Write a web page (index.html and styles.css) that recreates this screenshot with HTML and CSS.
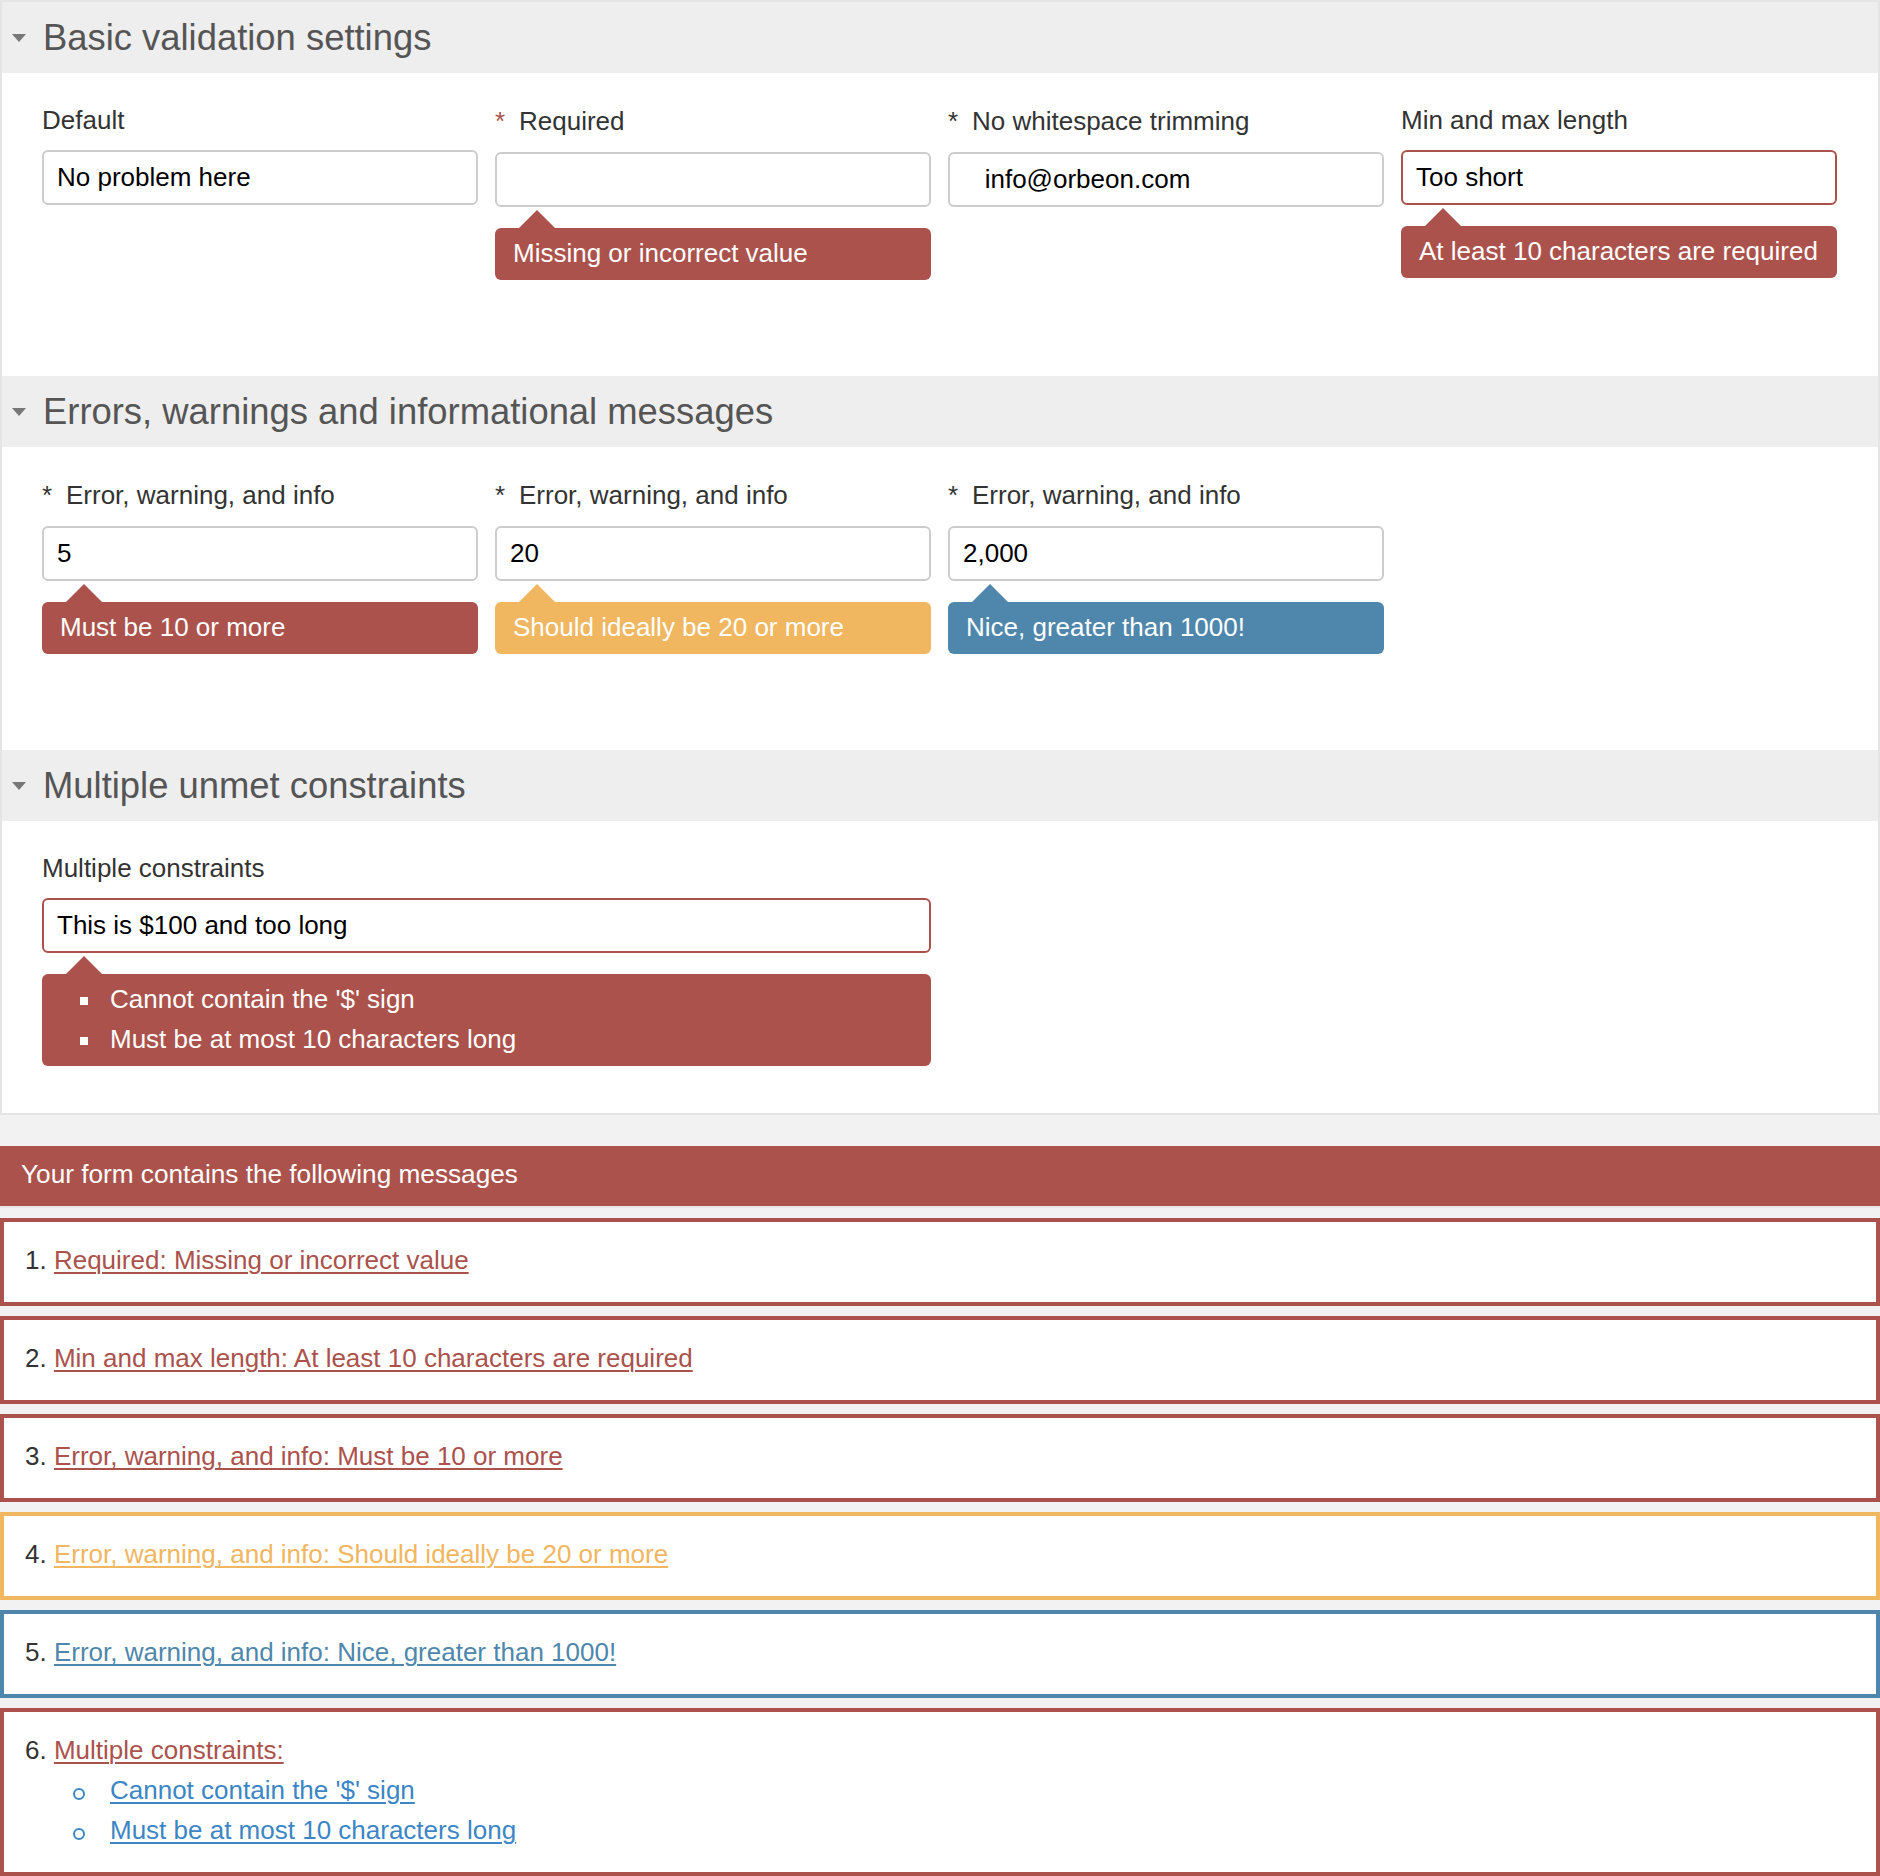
FILE: index.html
```html
<!DOCTYPE html>
<html lang="en">
<head>
<meta charset="utf-8">
<title>Validation</title>
<link rel="stylesheet" href="styles.css">
</head>
<body>
<div class="form">
  <section class="section">
    <div class="section-head"><span class="caret"></span><h2 class="section-title">Basic validation settings</h2></div>
    <div class="section-body">
      <div class="fields fields-tall">
        <div class="field">
          <div class="label">Default</div>
          <input class="input" type="text" value="No problem here">
        </div>
        <div class="field">
          <div class="label req"><span class="star star-red">*</span>Required</div>
          <input class="input" type="text" value="">
          <div class="tip tip-error">Missing or incorrect value</div>
        </div>
        <div class="field">
          <div class="label req"><span class="star">*</span>No whitespace trimming</div>
          <input class="input" type="text" value="   info@orbeon.com">
        </div>
        <div class="field">
          <div class="label">Min and max length</div>
          <input class="input input-error" type="text" value="Too short">
          <div class="tip tip-error">At least 10 characters are required</div>
        </div>
      </div>
    </div>
  </section>

  <section class="section">
    <div class="section-head"><span class="caret"></span><h2 class="section-title">Errors, warnings and informational messages</h2></div>
    <div class="section-body">
      <div class="fields fields-tall">
        <div class="field">
          <div class="label req"><span class="star">*</span>Error, warning, and info</div>
          <input class="input" type="text" value="5">
          <div class="tip tip-error">Must be 10 or more</div>
        </div>
        <div class="field">
          <div class="label req"><span class="star">*</span>Error, warning, and info</div>
          <input class="input" type="text" value="20">
          <div class="tip tip-warning">Should ideally be 20 or more</div>
        </div>
        <div class="field">
          <div class="label req"><span class="star">*</span>Error, warning, and info</div>
          <input class="input" type="text" value="2,000">
          <div class="tip tip-info">Nice, greater than 1000!</div>
        </div>
      </div>
    </div>
  </section>

  <section class="section">
    <div class="section-head"><span class="caret"></span><h2 class="section-title">Multiple unmet constraints</h2></div>
    <div class="section-body">
      <div class="fields">
        <div class="field field-wide">
          <div class="label">Multiple constraints</div>
          <input class="input input-error" type="text" value="This is $100 and too long">
          <div class="tip tip-error">
            <ul class="tip-list">
              <li>Cannot contain the '$' sign</li>
              <li>Must be at most 10 characters long</li>
            </ul>
          </div>
        </div>
      </div>
    </div>
  </section>
</div>

<div class="summary">
  <div class="summary-head">Your form contains the following messages</div>
  <ol class="summary-list">
    <li class="msg msg-error"><span class="num">1.</span> <a href="#" class="msg-link">Required: Missing or incorrect value</a></li>
    <li class="msg msg-error"><span class="num">2.</span> <a href="#" class="msg-link">Min and max length: At least 10 characters are required</a></li>
    <li class="msg msg-error"><span class="num">3.</span> <a href="#" class="msg-link">Error, warning, and info: Must be 10 or more</a></li>
    <li class="msg msg-warning"><span class="num">4.</span> <a href="#" class="msg-link">Error, warning, and info: Should ideally be 20 or more</a></li>
    <li class="msg msg-info"><span class="num">5.</span> <a href="#" class="msg-link">Error, warning, and info: Nice, greater than 1000!</a></li>
    <li class="msg msg-error"><span class="num">6.</span> <a href="#" class="msg-link">Multiple constraints:</a>
      <ul class="sub-list">
        <li><a href="#" class="sub-link">Cannot contain the '$' sign</a></li>
        <li><a href="#" class="sub-link">Must be at most 10 characters long</a></li>
      </ul>
    </li>
  </ol>
</div>
</body>
</html>
```
FILE: styles.css
```css
* { box-sizing: border-box; }

html, body {
  margin: 0;
  padding: 0;
}

body {
  background: #f2f2f2;
  font-family: "Liberation Sans", Arial, Helvetica, sans-serif;
  font-size: 26px;
  color: #333;
}

.form {
  background: #fff;
  border: 2px solid #e5e5e5;
}

.section-head {
  display: flex;
  align-items: center;
  height: 71px;
  background: #eeeeee;
  padding-left: 10px;
}

.caret {
  width: 0;
  height: 0;
  border-style: solid;
  border-width: 8px 7px 0 7px;
  border-color: #777 transparent transparent transparent;
  margin-right: 17px;
}

.section-title {
  margin: 0;
  font-size: 36.4px;
  font-weight: normal;
  color: #555;
  line-height: 71px;
}

.section-body {
  padding: 29px 41px 47px 40px;
}

.fields {
  display: grid;
  grid-template-columns: repeat(4, 1fr);
  column-gap: 17px;
  align-items: start;
}

.fields-tall { min-height: 227px; }

.field {
  display: flex;
  flex-direction: column;
}

.field-wide { grid-column: span 2; }

.label {
  height: 36px;
  line-height: 36px;
  margin-bottom: 12px;
  color: #333;
  white-space: nowrap;
}

.label.req {
  height: 38px;
  line-height: 38px;
}

.star {
  display: inline-block;
  width: 24px;
  color: #333;
}

.star-red { color: #ab524c; }

.input {
  display: block;
  width: 100%;
  height: 55px;
  border: 2px solid #cccccc;
  border-radius: 6px;
  padding: 0 13px;
  font-family: inherit;
  font-size: 26px;
  color: #000;
  background: #fff;
  outline: none;
}

.input-error { border-color: #ab524c; }

.tip {
  position: relative;
  margin-top: 21px;
  border-radius: 6px;
  padding: 5px 18px 7px;
  line-height: 40px;
  color: #fff;
  white-space: nowrap;
}

.tip::before {
  content: "";
  position: absolute;
  top: -18px;
  left: 24px;
  width: 0;
  height: 0;
  border-style: solid;
  border-width: 0 18px 18px 18px;
  border-color: transparent;
}

.tip-error { background: #ab524c; }
.tip-error::before { border-bottom-color: #ab524c; }
.tip-warning { background: #f0b660; }
.tip-warning::before { border-bottom-color: #f0b660; }
.tip-info { background: #4e87ab; }
.tip-info::before { border-bottom-color: #4e87ab; }

.tip-list {
  list-style: none;
  margin: 0;
  padding: 0 0 0 50px;
}

.tip-list li {
  position: relative;
}

.tip-list li::before {
  content: "";
  position: absolute;
  left: -30px;
  top: 18px;
  width: 8px;
  height: 8px;
  background: #fff;
}

.summary {
  margin-top: 31px;
}

.summary-head {
  height: 62px;
  background: #ab524c;
  color: #fff;
  padding-left: 21px;
  font-size: 26.2px;
  line-height: 56px;
  border-bottom: 2px solid #e8e8e8;
}

.summary-list {
  list-style: none;
  margin: 10px 0 0;
  padding: 0;
  display: flex;
  flex-direction: column;
  gap: 10px;
}

.msg {
  background: #fff;
  border: 4px solid #ab524c;
  padding: 18px 21px 22px;
  line-height: 40px;
}

.num { color: #333; }

.msg-link {
  text-decoration: underline;
  text-decoration-thickness: 2px;
  text-underline-offset: 3px;
}

.msg-error { border-color: #ab524c; }
.msg-error .msg-link { color: #ab524c; }
.msg-warning { border-color: #f0b660; }
.msg-warning .msg-link { color: #f0b660; }
.msg-info { border-color: #4e87ab; }
.msg-info .msg-link { color: #4e87ab; }

.sub-list {
  list-style: none;
  margin: 0;
  padding: 0 0 0 85px;
}

.sub-list li {
  position: relative;
}

.sub-list li::before {
  content: "";
  position: absolute;
  left: -37px;
  top: 18px;
  width: 8px;
  height: 8px;
  border: 2px solid #3c86c5;
  border-radius: 50%;
}

.sub-link {
  color: #3c86c5;
  text-decoration: underline;
  text-decoration-thickness: 2px;
  text-underline-offset: 3px;
}
```
